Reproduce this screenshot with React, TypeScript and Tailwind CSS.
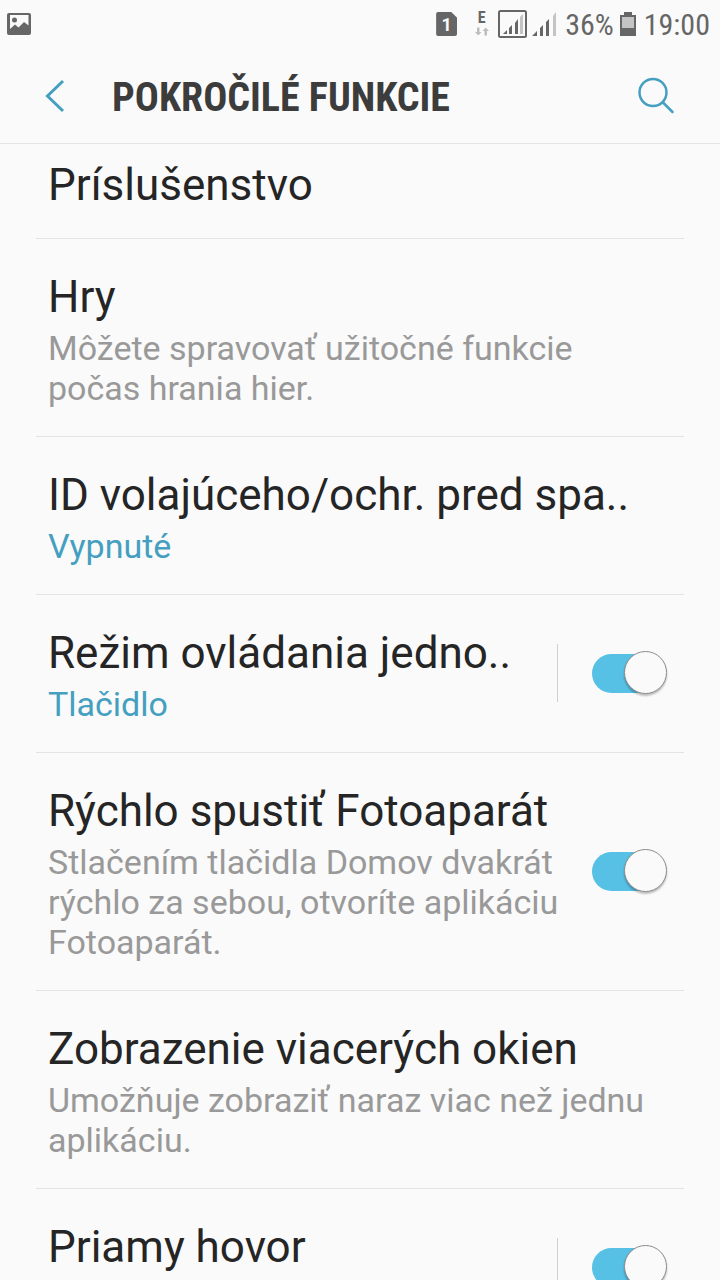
import { useState } from "react";

type Item = {
    id: string;
    title: string;
    note?: string;
    status?: string;
    toggle?: boolean;
    divider?: boolean;
};

const items: Item[] = [
    { id: "games", title: "Hry", note: "Môžete spravovať užitočné funkcie počas hrania hier." },
    { id: "caller-id", title: "ID volajúceho/ochr. pred spa..", status: "Vypnuté" },
    { id: "one-hand", title: "Režim ovládania jedno..", status: "Tlačidlo", toggle: true, divider: true },
    {
        id: "camera",
        title: "Rýchlo spustiť Fotoaparát",
        note: "Stlačením tlačidla Domov dvakrát rýchlo za sebou, otvoríte aplikáciu Fotoaparát.",
        toggle: true,
    },
    { id: "multi-window", title: "Zobrazenie viacerých okien", note: "Umožňuje zobraziť naraz viac než jednu aplikáciu." },
    { id: "direct-call", title: "Priamy hovor", toggle: true, divider: true },
];

function StatusBar() {
    return (
        <div className="flex h-12 shrink-0 items-center justify-between pl-[7px] pr-[10px] font-['Roboto_Condensed',Roboto,sans-serif] text-[30px] leading-9 text-[#666666]">
            <svg width="24" height="24" viewBox="0 0 24 24" aria-hidden="true">
                <path fillRule="evenodd" fill="#666666" d="M2 1h20a2 2 0 0 1 2 2v18a2 2 0 0 1-2 2H2a2 2 0 0 1-2-2V3a2 2 0 0 1 2-2zM3 3V17l5-4.500 3.500 3L17 10l4.500 3.500V3z" />
                <circle cx="7.5" cy="8" r="2.500" fill="#666666" />
            </svg>
            <div className="flex items-center">
                <div className="flex h-6 w-[21px] items-center justify-center rounded-xs bg-[#666666] pt-px font-[Roboto,sans-serif] text-lg font-bold text-[#fafafa] [clip-path:polygon(0_0,72%_0,100%_24%,100%_100%,0_100%)]">
                    1
                </div>
                <div className="ml-[17px] flex w-[15px] flex-col items-center font-['Roboto_Condensed',Roboto,sans-serif] text-base leading-3 font-bold">
                    E
                    <svg className="mt-[3px]" width="14" height="9" viewBox="0 0 14 9" fill="#bdbdbd" aria-hidden="true">
                        <path d="M2 0.500h2.500V5H6.500L3.250 8.500 0 5h2zM9.500 8.500H12V4h2L10.750 0.500 7.500 4h2z" />
                    </svg>
                </div>
                <svg className="ml-[9px]" width="59" height="28" viewBox="0 0 59 28" aria-hidden="true">
                    <rect x="1" y="1" width="27" height="26" rx="1.500" fill="none" stroke="#666666" strokeWidth="2" />
                    <path fill="#666666" d="M5 24l4-4v4zM11 18l3-3v9h-3zM17 13l3-4v15h-3z" />
                    <path fill="#c4c4c4" d="M22 7l3-3v20h-3z" />
                    <path fill="#666666" d="M34 26l5-5v5zM42 18l3-3v11h-3zM48 12l3-3v17h-3z" />
                    <path fill="#c4c4c4" d="M55 6l3-4v24h-3z" />
                </svg>
                <span className="ml-2 pt-px">36%</span>
                <svg className="ml-[6px]" width="16" height="24" viewBox="0 0 16 24" aria-hidden="true">
                    <path fill="#666666" d="M4 0h8v3h4v21H0V3h4z" />
                    <path fill="#c4c4c4" d="M2 5h12v11H2z" />
                </svg>
                <span className="ml-2 pt-px">19:00</span>
            </div>
        </div>
    );
}

function Header() {
    return (
        <header className="flex h-24 shrink-0 items-center border-b border-[#e4e4e4] pl-[44px] pr-[44px]">
            <button type="button" aria-label="Späť">
                <svg width="22" height="34" viewBox="0 0 22 34" fill="none" stroke="#459fc0" strokeWidth="3" aria-hidden="true">
                    <path d="M19 2L3.500 17 19 32" />
                </svg>
            </button>
            <h1 className="ml-[46px] grow pt-[5px] font-['Roboto_Condensed',Roboto,sans-serif] text-[40px] leading-12 font-bold text-[#3c3c3c]">
                POKROČILÉ FUNKCIE
            </h1>
            <button type="button" aria-label="Hľadať">
                <svg width="38" height="38" viewBox="0 0 38 38" fill="none" stroke="#459fc0" strokeWidth="2.500" strokeLinecap="round" aria-hidden="true">
                    <circle cx="15" cy="15.500" r="13.500" />
                    <path d="M25 25.500l9.500 9.500" />
                </svg>
            </button>
        </header>
    );
}

function Toggle({ id }: { id: string }) {
    const [on, setOn] = useState(true);

    return (
        <input
            id={id}
            type="checkbox"
            role="switch"
            checked={on}
            onChange={() => setOn(!on)}
            className="relative h-[39px] w-[70px] shrink-0 appearance-none rounded-full bg-[#bdbdbd] checked:bg-[#57c0e5] before:absolute before:-top-[3px] before:-left-[5px] before:size-[43px] before:rounded-full before:border before:border-[#8c8c8c] before:bg-[#fafafa] before:shadow-[0_2px_2px_rgba(0,0,0,0.25)] checked:before:left-8"
        />
    );
}

function Row({ item }: { item: Item }) {
    return (
        <li className="flex min-h-[158px] shrink-0 border-b border-[#e4e4e4] pl-3">
            <div className="grow pt-8 pr-6 pb-7">
                {item.toggle ? (
                    <label htmlFor={item.id} className="block text-[44px] leading-[52px] text-[#252525]">{item.title}</label>
                ) : (
                    <h2 className="text-[44px] leading-[52px] text-[#252525]">{item.title}</h2>
                )}
                {item.note && <p className="mt-[5px] text-[34px] leading-10 text-[#999999]">{item.note}</p>}
                {item.status && <p className="mt-[5px] text-[34px] leading-10 text-[#459fc0]">{item.status}</p>}
            </div>
            {item.toggle && (
                <div className="flex shrink-0 items-center pr-[22px] pb-px">
                    {item.divider && <div className="mr-[34px] h-[58px] w-px bg-[#d0d0d0]" />}
                    <Toggle id={item.id} />
                </div>
            )}
        </li>
    );
}

export default function App() {
    return (
        <div className="flex h-screen flex-col overflow-hidden bg-[#fafafa] font-[Roboto,sans-serif]">
            <StatusBar />
            <Header />
            <main className="min-h-0 grow overflow-hidden px-9">
                <ul className="flex flex-col">
                    <li className="border-b border-[#e4e4e4] pt-[15px] pb-[27px] pl-3">
                        <h2 className="text-[44px] leading-[52px] text-[#252525]">Príslušenstvo</h2>
                    </li>
                    {items.map((item) => (
                        <Row key={item.id} item={item} />
                    ))}
                </ul>
            </main>
        </div>
    );
}
